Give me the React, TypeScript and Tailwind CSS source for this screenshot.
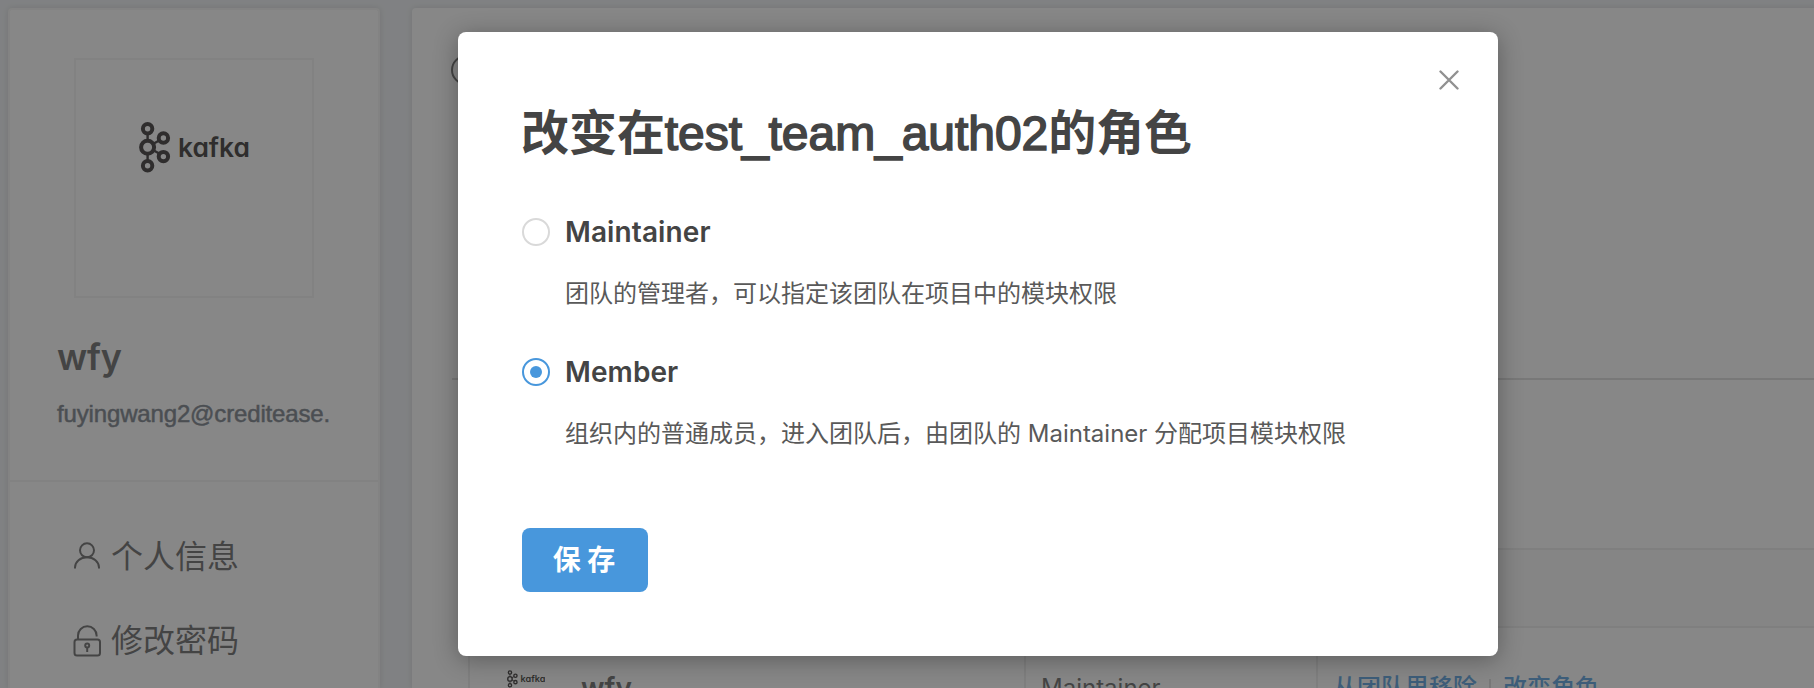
import { useState } from "react";

const sans = "font-[Inter,'Noto_Sans_CJK_SC',sans-serif]";

function KafkaLogo({ className }: { className: string }) {
  return (
    <svg className={className} viewBox="0 0 110 51" fill="none" stroke="#231f20">
      <g strokeWidth="2.4">
        <path d="M8.6 10v30M8.6 25l16-9M8.6 25l16 9" />
      </g>
      <g strokeWidth="4" fill="#fff">
        <circle cx="8.6" cy="6.8" r="4.7" />
        <circle cx="8.6" cy="25.2" r="6.5" />
        <circle cx="8.6" cy="43.7" r="4.7" />
        <circle cx="24.4" cy="16" r="4.7" />
        <circle cx="24.4" cy="34.6" r="4.7" />
      </g>
      <text
        className="[font-feature-settings:'cv11']"
        x="39"
        y="35"
        fill="#231f20"
        stroke="none"
        fontFamily="Inter, sans-serif"
        fontWeight="600"
        fontSize="26"
        textLength="72"
        lengthAdjust="spacingAndGlyphs"
      >
        kafka
      </text>
    </svg>
  );
}

function UserIcon() {
  return (
    <svg className="h-8 w-7" viewBox="0 0 28 32" fill="none" stroke="currentColor" strokeWidth="2">
      <circle cx="13" cy="9.3" r="7" />
      <path d="M1 27.500v-1a12 10.2 0 0 1 24 0v1" />
    </svg>
  );
}

function LockIcon() {
  return (
    <svg className="h-8 w-7 overflow-visible" viewBox="0 0 28 32" fill="none" stroke="currentColor" strokeWidth="2">
      <rect x="0.5" y="14.5" width="25.500" height="16" rx="2.5" />
      <path d="M4 14.500V10.500a9.3 9.3 0 0 1 18.600 0V11.500" />
      <circle cx="13.200" cy="20.500" r="2" />
      <path d="M13.200 22.500v4.500" />
    </svg>
  );
}

function Sidebar() {
  return (
    <aside className="flex w-[372px] shrink-0 flex-col rounded-t-sm border-2 border-b-0 border-[#f4f4f4] bg-white shadow-[0_0_6px_rgba(0,0,0,0.14)]">
      <div className="flex h-[472px] shrink-0 flex-col border-b-2 border-[#f2f2f2] pt-12 pl-12">
        <div className="ml-4 flex h-60 w-60 items-start justify-center border-2 border-[#f2f2f2] pt-[62px]">
          <KafkaLogo className="h-[51px] w-[110px]" />
        </div>
        <div className="mt-[35px] -ml-px text-[36px] leading-[48px] font-semibold tracking-[-0.2px] text-[#595959]">wfy</div>
        <div className="mt-[15px] -ml-px font-['Liberation_Sans',sans-serif] text-[24px] leading-9 tracking-[-0.15px] whitespace-nowrap text-[#69727c] [-webkit-text-stroke:0.5px]">
          fuyingwang2@creditease.
        </div>
      </div>
      <nav className="flex flex-col pt-[33px] pl-16 text-[32px] text-[#595959]">
        <a className="flex h-[84px] items-center gap-[9px]">
          <UserIcon />
          个人信息
        </a>
        <a className="flex h-[84px] items-center gap-[9px]">
          <LockIcon />
          修改密码
        </a>
      </nav>
    </aside>
  );
}

function TeamPanel() {
  return (
    <main className="flex w-[1500px] shrink-0 flex-col rounded-tl-sm bg-white pl-10 shadow-[0_0_6px_rgba(0,0,0,0.14)]">
      <div className="flex h-[372px] shrink-0 items-start border-b-2 border-[#d9d9d9] pt-[47px]">
        <div className="-ml-px h-[30px] w-[30px] rounded-full border-2 border-[#595959]" />
      </div>
      <div className="mt-[168px] ml-4 shrink-0 border-2 border-b-0 border-[#ebebeb]">
        <div className="h-[78px] border-b-2 border-[#ebebeb] bg-[#fafafa]" />
        <div className="grid h-[118px] grid-cols-[556px_292px_1fr] text-[24px] text-[#595959]">
          <div className="flex items-start border-r-2 border-[#ebebeb] pl-[37px]">
            <KafkaLogo className="mt-[42px] h-[18px] w-[38px]" />
            <div className="mt-[42px] ml-9 text-[28px] leading-[36px] font-semibold">wfy</div>
          </div>
          <div className="flex items-center border-r-2 border-[#ebebeb] pt-0.5 pl-[15px]">Maintainer</div>
          <div className="flex items-center pt-0.5 pl-[15px] font-medium text-[#4897dc]">
            <span>从团队里移除</span>
            <span className="mx-3 h-[18px] w-0.5 bg-[#d9d9d9]" />
            <span>改变角色</span>
          </div>
        </div>
      </div>
    </main>
  );
}

const roles = [
  { name: "Maintainer", description: "团队的管理者，可以指定该团队在项目中的模块权限" },
  { name: "Member", description: "组织内的普通成员，进入团队后，由团队的 Maintainer 分配项目模块权限" },
];

function RoleDialog() {
  const [role, setRole] = useState("Member");
  return (
    <div
      role="dialog"
      className="absolute top-8 left-[458px] flex h-[624px] w-[1040px] flex-col rounded-lg bg-white px-16 pt-[68px] text-[#444] shadow-[0_4px_24px_rgba(0,0,0,0.32)]"
    >
      <button aria-label="Close" className="absolute top-[38px] right-[39px] h-5 w-5 text-[#919191]">
        <svg viewBox="0 0 20 20" fill="none" stroke="currentColor" strokeWidth="2.4" strokeLinecap="round">
          <path d="M1.500 1.500l17 17M18.500 1.500l-17 17" />
        </svg>
      </button>
      <h1 className="-ml-px font-['Liberation_Sans','Noto_Sans_CJK_SC',sans-serif] text-[48px] leading-[68px] tracking-[-0.06px] whitespace-nowrap">
        <span className="font-bold">改变在</span>
        <span className="[-webkit-text-stroke:1.6px]">test_team_auth02</span>
        <span className="font-bold">的角色</span>
      </h1>
      <div className="mt-11 flex flex-col">
        {roles.map((r) => (
          <label key={r.name} className="flex h-[140px] gap-[15px]">
            <span
              className={
                r.name === role
                  ? "mt-1.5 flex h-7 w-7 items-center justify-center rounded-full border-2 border-[#4897dc]"
                  : "mt-1.5 flex h-7 w-7 items-center justify-center rounded-full border-2 border-[#d9d9d9]"
              }
              onClick={() => setRole(r.name)}
            >
              {r.name === role && <span className="h-3 w-3 rounded-full bg-[#4897dc]" />}
            </span>
            <span className="flex flex-col">
              <span className="text-[28px] leading-10 font-semibold tracking-[0.1px]">{r.name}</span>
              <span className="mt-6 text-[24px] leading-9 whitespace-nowrap text-[#595959]">{r.description}</span>
            </span>
          </label>
        ))}
      </div>
      <button className="mt-9 h-16 w-[126px] rounded-lg bg-[#4897dc] pr-0.5 text-[28px] font-bold text-white">
        保 存
      </button>
    </div>
  );
}

export default function App() {
  return (
    <div className={`relative h-[688px] w-full overflow-hidden bg-[#eef1f4] ${sans}`}>
      <div className="flex h-full gap-8 pt-2 pl-2">
        <Sidebar />
        <TeamPanel />
      </div>
      <div className="absolute inset-0 bg-[#373737]/60" />
      <RoleDialog />
    </div>
  );
}
